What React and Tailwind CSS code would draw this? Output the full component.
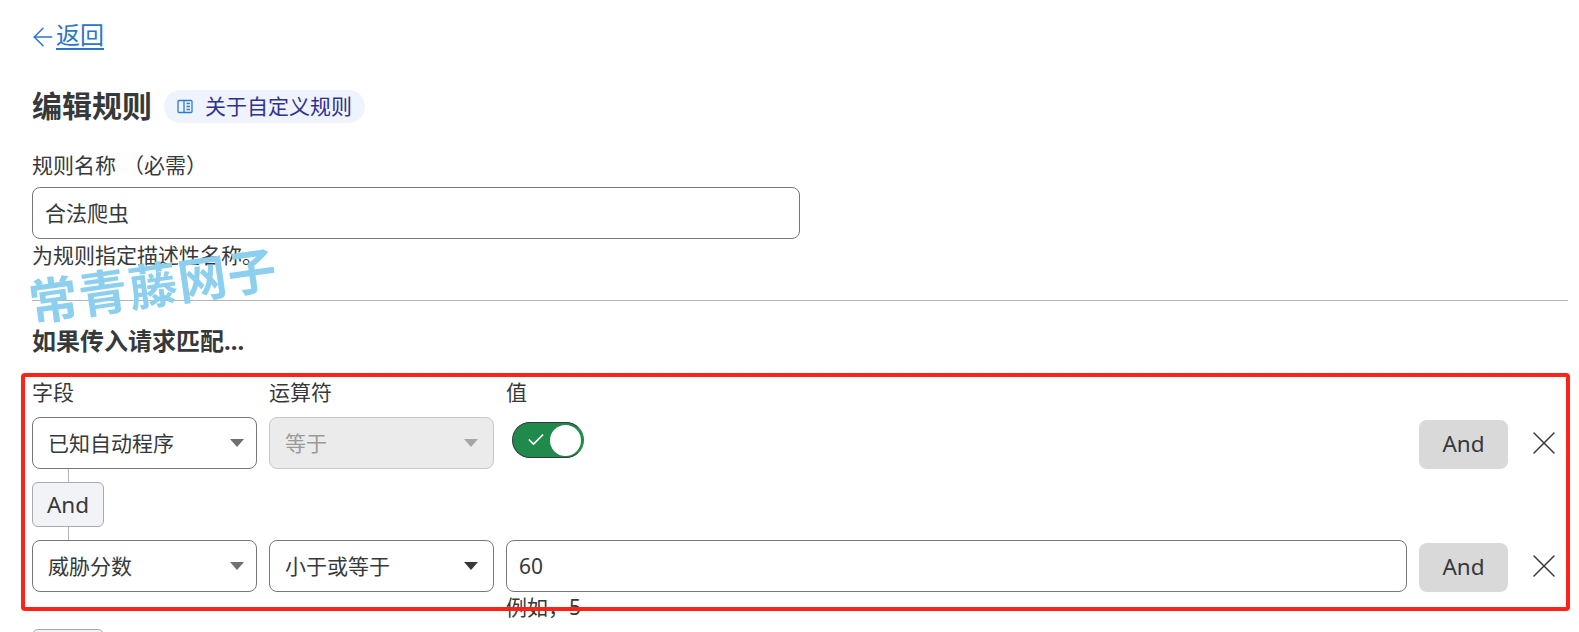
import { Check, X, ArrowLeft } from "lucide-react";

const FONT = "font-['Noto_Sans','Noto_Sans_CJK_SC',sans-serif]";

function Select({ label, disabled, caret = "pr-[15px]" }) {
  return (
    <div className={`w-[225px] h-[52px] shrink-0 rounded-lg border flex items-center justify-between pl-[15px] ${caret} ${disabled ? "bg-[#ebebeb] border-[#c8c8c8] text-[#9a9a9a]" : "bg-white border-[#767676]"}`}>
      <span>{label}</span>
      <span className={`w-0 h-0 border-x-[7px] border-x-transparent border-t-[8px] ${disabled ? "border-t-[#a6a6a6]" : "border-t-[#6f6f6f]"}`} />
    </div>
  );
}

function AndButton() {
  return <div className="w-[89px] h-[49px] shrink-0 self-end rounded-lg bg-[#d9d9d9] flex items-center justify-center pb-[2px] text-[22.5px]">And</div>;
}

function CloseBtn() {
  return (
    <div className="w-[48px] flex items-center justify-center">
      <X size={40} strokeWidth={0.9} className="text-[#36393a] shrink-0" />
    </div>
  );
}

export default function App() {
  return (
    <div className={`relative h-[632px] overflow-hidden bg-white pl-[32px] pr-[11px] text-[21px] leading-[28px] text-[#36393a] ${FONT}`}>
      <div className="pt-[19px] flex items-center h-[51px] text-[24px] text-[#2c74c9]">
        <ArrowLeft size={30} strokeWidth={1.2} className="-ml-[4px] -mr-[2px] mt-[3px]" />
        <span className="underline underline-offset-4">返回</span>
      </div>

      <div className="mt-[35px] flex items-center h-[40px]">
        <h1 className="text-[30px] font-bold leading-[40px]">编辑规则</h1>
        <div className="ml-[12px] h-[33px] w-[201px] rounded-full bg-[#eff3fb] flex items-center pl-[13px] text-[21px] text-[#2e3192]">
          <svg width="16" height="15" viewBox="0 0 16 15" fill="none" stroke="#2c7cd0" strokeWidth="1.3">
            <rect x="1" y="1.5" width="14" height="12" rx="1" />
            <path d="M7 1.5v12M9.5 4.5h3.5M9.5 7.5h3.5M9.5 10.5h3.5" />
          </svg>
          <span className="ml-[12px] whitespace-nowrap">关于自定义规则</span>
        </div>
      </div>

      <div className="mt-[25px]">规则名称<span className="ml-[7px]">（必需）</span></div>
      <div className="mt-[8px] w-[768px] h-[52px] rounded-lg border border-[#767676] flex items-center pl-[12px]">合法爬虫</div>
      <div className="mt-[2px]">为规则指定描述性名称。</div>

      <div className="mt-[31px] h-px bg-[#b5b5b5]" />
      <div className="mt-[26px] font-bold text-[24px]">如果传入请求匹配...</div>

      <div className="mt-[23px] flex">
        <div className="w-[237px]">字段</div>
        <div className="w-[237px]">运算符</div>
        <div>值</div>
      </div>

      <div className="mt-[11px] flex gap-[12px]">
        <Select label="已知自动程序" caret="pr-[12px]" />
        <Select label="等于" disabled />
        <div className="flex-1 pl-[6px] pt-[5px]">
          <div className="w-[72px] h-[36px] rounded-full bg-[#1f8a4c] border border-[#36393a] border-r-[#1f8a4c] flex items-center justify-between pl-[13px] pr-[2px]">
            <Check size={20} strokeWidth={2} className="text-white" />
            <div className="w-[31px] h-[31px] rounded-full bg-white" />
          </div>
        </div>
        <AndButton />
        <CloseBtn />
      </div>

      <div className="ml-[36px] w-px h-[13px] bg-[#b5b5b5]" />
      <div className="w-[72px] h-[45px] rounded-md border border-[#a9a9b0] bg-[#f2f3f7] flex items-center justify-center text-[22.5px]">And</div>
      <div className="ml-[36px] w-px h-[13px] bg-[#b5b5b5]" />

      <div className="flex gap-[12px]">
        <Select label="威胁分数" caret="pr-[12px]" />
        <div className="w-[225px] h-[52px] shrink-0 rounded-lg border border-[#767676] flex items-center justify-between pl-[15px] pr-[15px]">
          <span>小于或等于</span>
          <span className="w-0 h-0 border-x-[7px] border-x-transparent border-t-[8px] border-t-[#36393a]" />
        </div>
        <div className="flex-1 h-[52px] rounded-lg border border-[#767676] flex items-center pl-[12px]">60</div>
        <AndButton />
        <CloseBtn />
      </div>
      <div className="ml-[474px] mt-[1px]">例如，5</div>
      <div className="mt-[8px] w-[72px] h-[45px] rounded-md border border-[#a9a9b0] bg-[#f2f3f7]" />

      {/* annotation and watermark sit over the page */}
      <div className="absolute left-[21px] top-[373px] w-[1549px] h-[238px] rounded-[4px] border-4 border-[#ff2216]" />
      <div className="absolute left-[28px] top-[255px] -rotate-[8deg] text-[49px] font-bold leading-[60px] tracking-[1px] text-[#8ccfee] whitespace-nowrap">常青藤网子</div>
    </div>
  );
}
